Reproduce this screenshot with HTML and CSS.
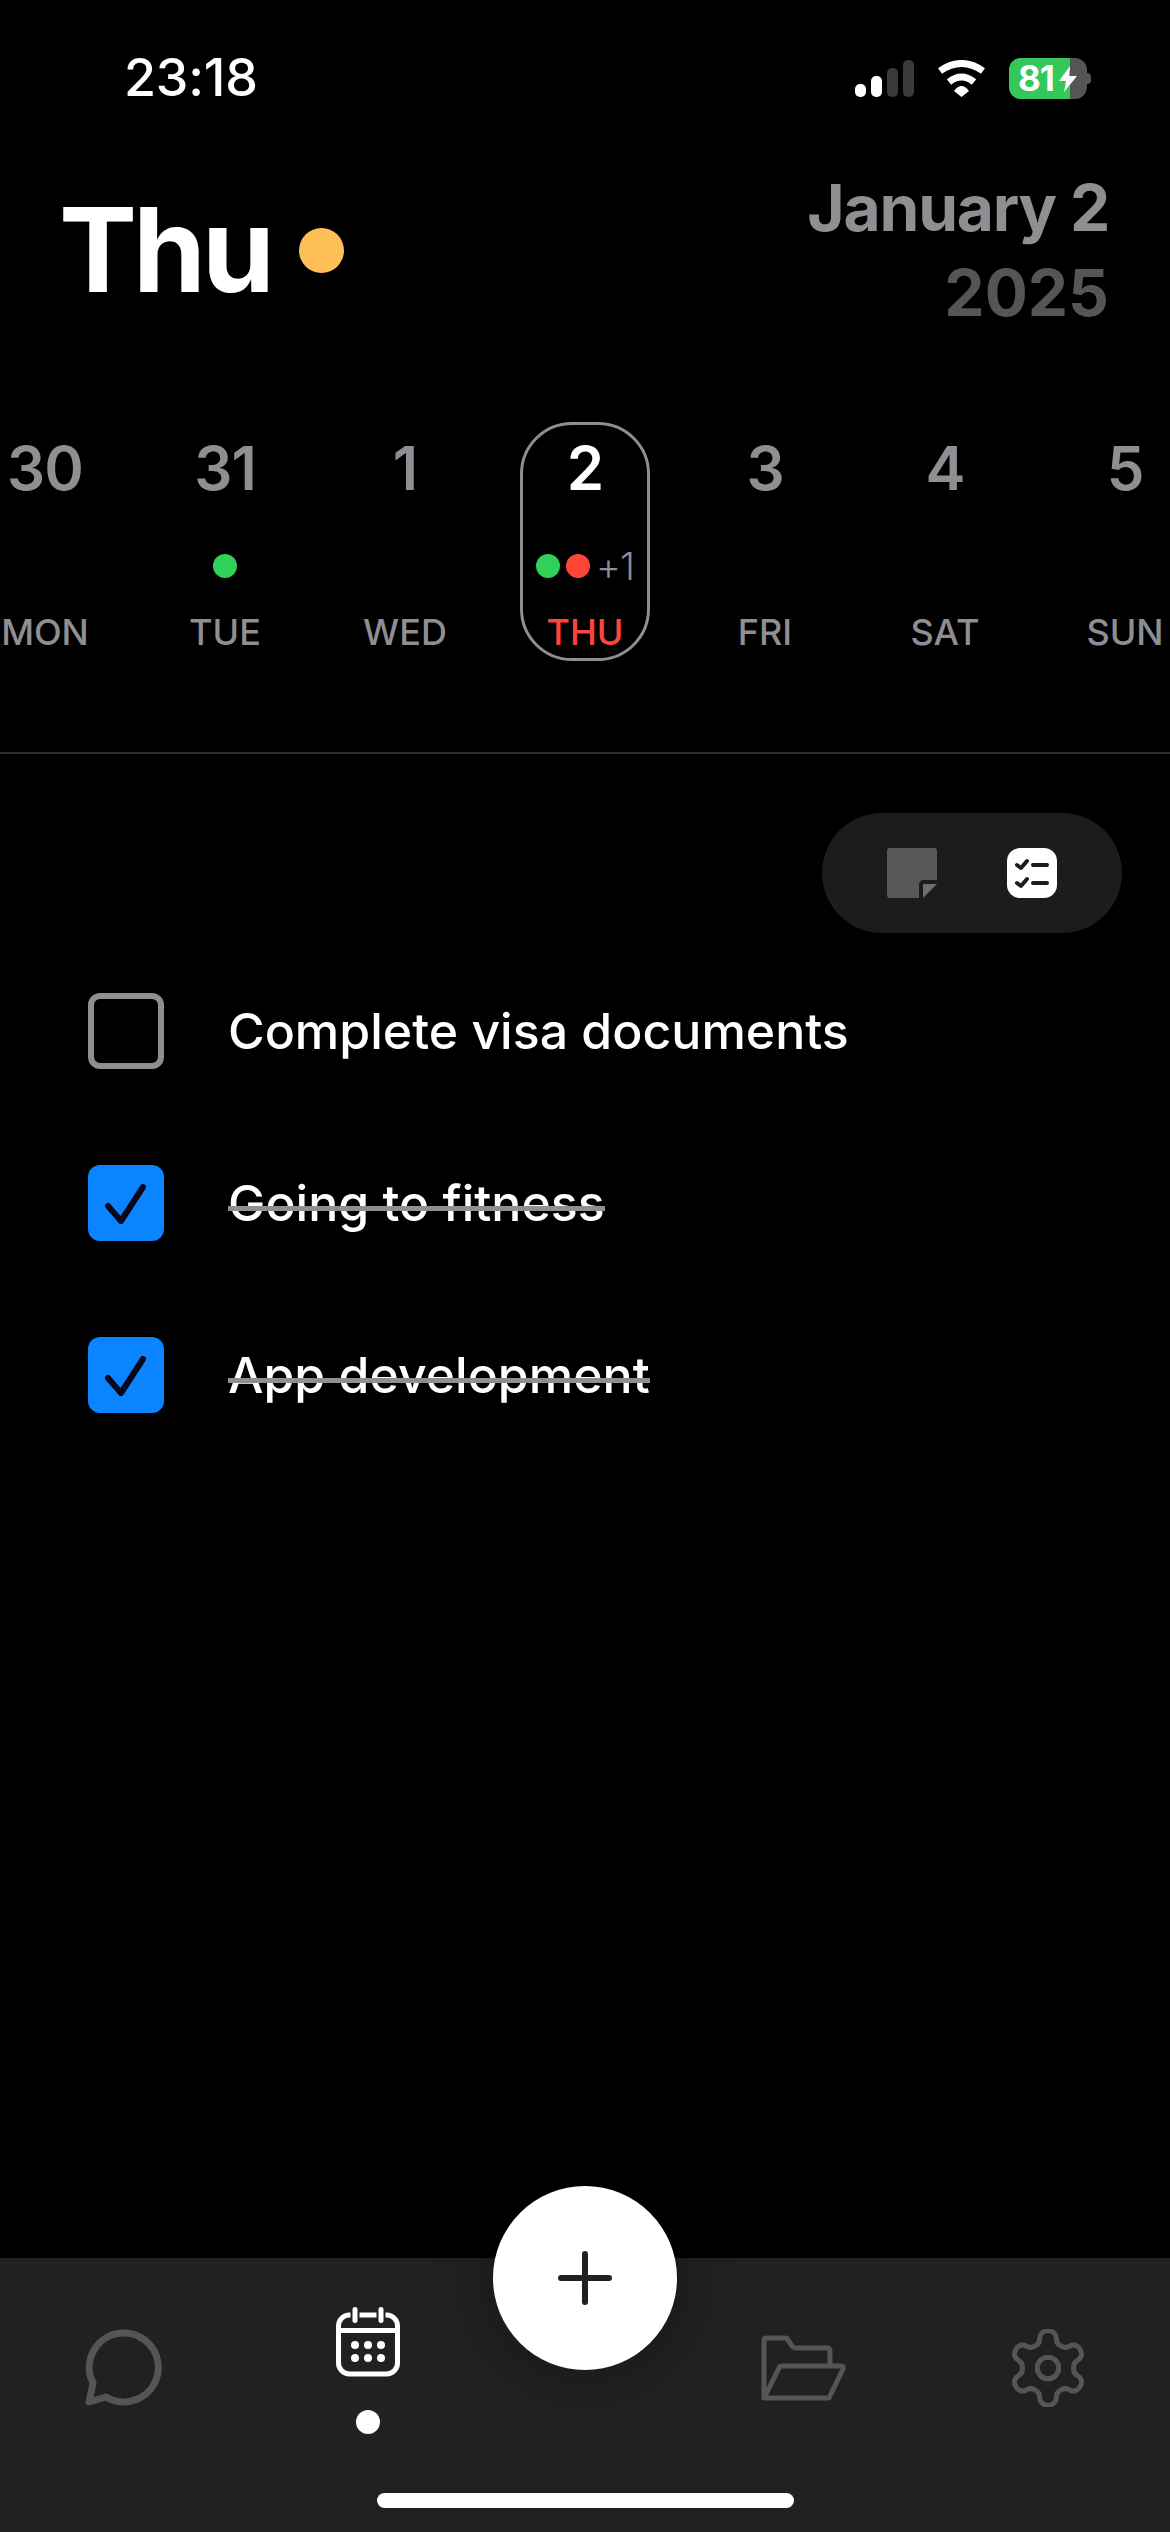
FILE: index.html
```html
<!DOCTYPE html>
<html lang="en">
<head>
    <meta charset="UTF-8">
    <meta name="viewport" content="width=device-width, initial-scale=1.0">
    <title>Calendar</title>
    <link rel="stylesheet" href="styles.css">
</head>
<body>
    <div class="status">
        <div class="time">23:18</div>
        <div class="status-icons">
            <div class="signal">
                <span class="bar bar-1"></span>
                <span class="bar bar-2"></span>
                <span class="bar bar-3"></span>
                <span class="bar bar-4"></span>
            </div>
            <svg class="wifi" width="49" height="37" viewBox="0 0 49 37">
                <path d="M3 11Q24.5-4 46 11M12 22Q24.5 12 37 22" fill="none" stroke="#fff" stroke-width="7"/>
                <path d="M17 31Q24.5 21 32 31L24.5 37Z" fill="#fff"/>
            </svg>
            <div class="battery">
                <div class="level">81</div>
                <svg class="bolt" width="20" height="26" viewBox="0 0 20 26">
                    <path d="M12 0L1 15H8L6 26L19 10H11Z" fill="#fff"/>
                </svg>
            </div>
            <div class="nub"></div>
        </div>
    </div>

    <div class="header">
        <div class="day-title">
            <h1>Thu</h1>
            <span class="day-dot"></span>
        </div>
        <div class="date">
            <div class="month">January 2</div>
            <div class="year">2025</div>
        </div>
    </div>

    <div class="week">
        <div class="day"><div class="num">30</div><div class="marks"></div><div class="label">MON</div></div>
        <div class="day"><div class="num">31</div><div class="marks"><span class="mark green"></span></div><div class="label">TUE</div></div>
        <div class="day"><div class="num">1</div><div class="marks"></div><div class="label">WED</div></div>
        <div class="day today">
            <div class="num">2</div>
            <div class="marks"><span class="mark green"></span><span class="mark red"></span><span class="more">+1</span></div>
            <div class="label">THU</div>
        </div>
        <div class="day"><div class="num">3</div><div class="marks"></div><div class="label">FRI</div></div>
        <div class="day"><div class="num">4</div><div class="marks"></div><div class="label">SAT</div></div>
        <div class="day"><div class="num">5</div><div class="marks"></div><div class="label">SUN</div></div>
    </div>

    <div class="divider"></div>

    <div class="main">
        <div class="toggle">
            <svg width="50" height="50" viewBox="0 0 50 50">
                <rect width="50" height="50" rx="3" fill="#58585a"/>
                <path d="M32 50V37Q32 32 37 32H50V50Z" fill="#1c1c1e"/>
                <path d="M36 36H50L36 50Z" fill="#6e6e70"/>
            </svg>
            <svg width="50" height="50" viewBox="0 0 50 50">
                <rect width="50" height="50" rx="13" fill="#fff"/>
                <path d="M10 17L14 20L20 13M10 35L14 38L20 31" fill="none" stroke="#1c1c1e" stroke-width="4" stroke-linecap="round" stroke-linejoin="round"/>
                <path d="M26 17H40M26 35H40" fill="none" stroke="#1c1c1e" stroke-width="4" stroke-linecap="round"/>
            </svg>
        </div>

        <div class="tasks">
            <div class="task">
                <span class="box"></span>
                <span class="task-text">Complete visa documents</span>
            </div>
            <div class="task done">
                <svg class="box-done" width="76" height="76" viewBox="0 0 76 76">
                    <rect width="76" height="76" rx="12" fill="#0a84ff"/>
                    <path d="M20 41L33 56L55 22" fill="none" stroke="#08081a" stroke-width="6" stroke-linecap="round" stroke-linejoin="round"/>
                </svg>
                <span class="task-text">Going to fitness</span>
            </div>
            <div class="task done">
                <svg class="box-done" width="76" height="76" viewBox="0 0 76 76">
                    <rect width="76" height="76" rx="12" fill="#0a84ff"/>
                    <path d="M20 41L33 56L55 22" fill="none" stroke="#08081a" stroke-width="6" stroke-linecap="round" stroke-linejoin="round"/>
                </svg>
                <span class="task-text">App development</span>
            </div>
        </div>
    </div>

    <div class="tabbar">
        <div class="fab">
            <svg width="54" height="54" viewBox="0 0 54 54">
                <path d="M27 3V51M3 27H51" fill="none" stroke="#212121" stroke-width="6" stroke-linecap="round"/>
            </svg>
        </div>
        <div class="tabs">
            <div class="tab">
                <svg width="77" height="77" viewBox="0 0 77 77">
                    <path d="M21 68L4 73L8 54A34.5 34.5 0 1 1 21 68Z" fill="none" stroke="#555" stroke-width="7" stroke-linejoin="round"/>
                </svg>
            </div>
            <div class="tab active">
                <svg width="64" height="70" viewBox="0 0 64 70">
                    <rect x="2.5" y="8" width="59" height="59" rx="11" fill="none" stroke="#fff" stroke-width="5"/>
                    <path d="M2.5 23.5H61.5" stroke="#fff" stroke-width="5"/>
                    <path d="M19 2.5V13.5M45 2.5V13.5" stroke="#212121" stroke-width="9" stroke-linecap="round"/>
                    <path d="M19 2.5V13.5M45 2.5V13.5" stroke="#fff" stroke-width="5" stroke-linecap="round"/>
                    <g fill="#fff">
                        <circle cx="19" cy="38" r="4"/><circle cx="32" cy="38" r="4"/><circle cx="45" cy="38" r="4"/>
                        <circle cx="19" cy="51" r="4"/><circle cx="32" cy="51" r="4"/><circle cx="45" cy="51" r="4"/>
                    </g>
                </svg>
                <span class="tab-dot"></span>
            </div>
            <div></div>
            <div class="tab">
                <svg width="85" height="66" viewBox="0 0 85 66">
                    <path d="M3 63V6Q3 3 6 3H24Q26 3 27 5L31 11Q32 13 35 13H66Q69 13 69 16V31" fill="none" stroke="#555" stroke-width="5" stroke-linejoin="round"/>
                    <path d="M3 63H68L82 34Q83 31 80 31H21Q19 31 18 33Z" fill="none" stroke="#555" stroke-width="5" stroke-linejoin="round"/>
                </svg>
            </div>
            <div class="tab">
                <svg width="74" height="78" viewBox="2.2 1.5 19.6 21">
                    <path d="M12.22 2h-.44a2 2 0 0 0-2 2v.18a2 2 0 0 1-1 1.73l-.43.25a2 2 0 0 1-2 0l-.15-.08a2 2 0 0 0-2.73.73l-.22.38a2 2 0 0 0 .73 2.73l.15.1a2 2 0 0 1 1 1.72v.51a2 2 0 0 1-1 1.74l-.15.09a2 2 0 0 0-.73 2.73l.22.38a2 2 0 0 0 2.73.73l.15-.08a2 2 0 0 1 2 0l.43.25a2 2 0 0 1 1 1.73V20a2 2 0 0 0 2 2h.44a2 2 0 0 0 2-2v-.18a2 2 0 0 1 1-1.73l.43-.25a2 2 0 0 1 2 0l.15.08a2 2 0 0 0 2.73-.73l.22-.39a2 2 0 0 0-.73-2.73l-.15-.08a2 2 0 0 1-1-1.74v-.5a2 2 0 0 1 1-1.74l.15-.09a2 2 0 0 0 .73-2.73l-.22-.38a2 2 0 0 0-2.73-.73l-.15.08a2 2 0 0 1-2 0l-.43-.25a2 2 0 0 1-1-1.73V4a2 2 0 0 0-2-2z" fill="none" stroke="#555" stroke-width="1.35"/>
                    <circle cx="12" cy="12" r="2.9" fill="none" stroke="#555" stroke-width="1.35"/>
                </svg>
            </div>
        </div>
        <div class="home"></div>
    </div>
</body>
</html>
```

FILE: styles.css
```css
* { box-sizing: border-box; }
body { margin: 0; width: 1170px; height: 2532px; background: #000; color: #fff; font-family: Inter, "Noto Sans", sans-serif; display: flex; flex-direction: column; overflow: hidden; }

.status { height: 156px; flex: none; display: flex; align-items: center; justify-content: space-between; padding: 0 79px 0 124px; }
.time { font-size: 52px; font-weight: 500; line-height: 60px; letter-spacing: -0.2px; }
.status-icons { display: flex; align-items: center; }
.signal { display: flex; align-items: flex-end; gap: 5px; height: 37px; margin-right: 23px; }
.bar { width: 11px; background: #fff; border-radius: 5px; }
.bar-1 { height: 13px; }
.bar-2 { height: 21px; }
.bar-3 { height: 29px; background: #3a3a3c; }
.bar-4 { height: 37px; background: #3a3a3c; }
.wifi { margin-right: 23px; }
.battery { position: relative; width: 78px; height: 41px; background: #555; border-radius: 12px; overflow: hidden; }
.level { width: 61px; height: 41px; padding-left: 9px; background: #34c759; font-size: 35px; font-weight: 700; line-height: 41px; letter-spacing: -1px; }
.bolt { position: absolute; left: 49px; top: 8px; }
.nub { width: 4px; height: 11px; background: #555; border-radius: 0 4px 4px 0; }

.header { height: 188px; flex: none; display: flex; align-items: center; justify-content: space-between; padding: 0 61px 0 59px; }
.day-title { display: flex; align-items: center; gap: 28px; }
h1 { margin: 0; font-size: 117px; font-weight: 700; line-height: 130px; letter-spacing: -4px; }
.day-dot { width: 45px; height: 45px; border-radius: 50%; background: #ffbf57; }
.date { text-align: right; font-size: 64px; font-weight: 700; line-height: 85px; }
.month { color: #8e8e93; letter-spacing: -1.2px; }
.year { color: #555; }

.week { display: grid; grid-template-columns: repeat(7, 180px); width: 1260px; margin: 78px 0 0 -45px; flex: none; }
.day { width: 130px; height: 239px; margin: 0 auto; padding-top: 13px; border: 3px solid transparent; border-radius: 52px; display: flex; flex-direction: column; align-items: center; color: #8e8e93; }
.day.today { border-color: #8e8e93; }
.num { font-size: 60px; font-weight: 600; line-height: 60px; letter-spacing: -1px; }
.marks { height: 24px; margin-top: 56px; display: flex; align-items: center; gap: 6px; white-space: nowrap; }
.mark { width: 24px; height: 24px; border-radius: 50%; }
.mark.green { background: #30d158; }
.mark.red { background: #ff453a; }
.more { font-size: 38px; font-weight: 300; line-height: 24px; letter-spacing: -1px; }
.label { margin-top: 32px; font-size: 36px; font-weight: 500; line-height: 44px; }
.today .num { color: #fff; }
.today .label { color: #ff453a; }

.divider { height: 2px; margin-top: 91px; flex: none; background: #2c2c2e; }

.main { flex: 1; }
.toggle { width: 300px; height: 120px; margin: 59px 48px 0 auto; padding-left: 65px; display: flex; align-items: center; gap: 70px; background: #1c1c1e; border-radius: 60px; }
.tasks { margin-top: 60px; padding-left: 88px; display: flex; flex-direction: column; gap: 96px; }
.task { display: flex; align-items: center; height: 76px; gap: 64px; }
.box { width: 76px; height: 76px; border: 6px solid #8e8e93; border-radius: 12px; }
.box-done { flex: none; }
.task-text { position: relative; font-size: 50px; font-weight: 500; line-height: 60px; }
.done .task-text::after { content: ""; position: absolute; left: 0; right: 0; top: calc(50% + 3px); height: 5px; background: #8e8e93; }

.tabbar { position: relative; height: 274px; flex: none; background: #212121; }
.fab { position: absolute; left: 493px; top: -72px; width: 184px; height: 184px; display: flex; align-items: center; justify-content: center; background: #fff; border-radius: 50%; box-shadow: 0 0 60px rgba(0, 0, 0, 0.35); }
.tabs { height: 219px; display: grid; grid-template-columns: 246px 244px 190px 246px 244px; align-items: center; }
.tab { display: flex; flex-direction: column; align-items: center; }
.tab.active { margin-top: 6px; }
.tab-dot { width: 24px; height: 24px; margin-top: 33px; background: #fff; border-radius: 50%; }
.home { width: 417px; height: 15px; margin: 16px auto 0; background: #fff; border-radius: 8px; }
```
